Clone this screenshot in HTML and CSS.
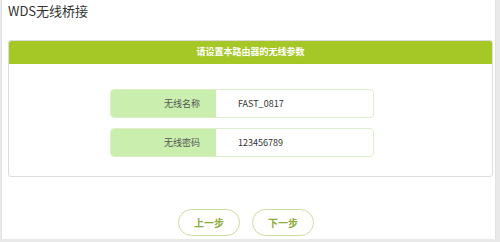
FILE: index.html
```html
<!DOCTYPE html>
<html lang="zh-CN">
<head>
    <meta charset="UTF-8">
    <title>WDS无线桥接</title>
    <link rel="stylesheet" href="styles.css">
</head>
<body>
    <div class="page">
        <h1 class="title">WDS无线桥接</h1>

        <div class="card">
            <div class="card-head">请设置本路由器的无线参数</div>
            <div class="card-body">
                <div class="field">
                    <div class="field-label">无线名称</div>
                    <div class="field-value">FAST_0817</div>
                </div>
                <div class="field">
                    <div class="field-label">无线密码</div>
                    <div class="field-value">123456789</div>
                </div>
            </div>
        </div>

        <div class="actions">
            <button type="button" class="step-btn">上一步</button>
            <button type="button" class="step-btn">下一步</button>
        </div>
    </div>
</body>
</html>
```

FILE: styles.css
```css
/* General styles */
body {
    margin: 0;
    font-family: "Noto Sans CJK SC", "Liberation Sans", sans-serif;
    background-color: #e9e9e9;
}

.page {
    box-sizing: border-box;
    width: 495px;
    height: 239px;
    margin-left: 1px;
    padding: 0 2px 0 6px;
    background: #fff;
    border-left: 1px solid #e2e2e2;
    border-right: 1px solid #e2e2e2;
    overflow: hidden;
}

.title {
    margin: 0;
    padding-top: 1px;
    height: 39px;
    font-size: 13px;
    line-height: 20px;
    font-weight: normal;
    color: #333;
}

/* Card */
.card {
    border: 1px solid #dcdcdc;
    border-radius: 3px;
    overflow: hidden;
}

.card-head {
    height: 23px;
    line-height: 22px;
    background-color: #a6c827;
    color: #fff;
    font-size: 9px;
    font-weight: bold;
    text-align: center;
}

.card-body {
    display: flex;
    flex-direction: column;
    gap: 10px;
    padding: 25px 0 19px 101px;
}

.field {
    display: flex;
    width: 264px;
    height: 29px;
    box-sizing: border-box;
    border: 1px solid #dcefc9;
    border-radius: 4px;
    overflow: hidden;
    font-size: 9px;
}

.field-label {
    width: 105px;
    padding-right: 16px;
    box-sizing: border-box;
    background-color: #c9eeae;
    color: #555;
    text-align: right;
    line-height: 27px;
}

.field-value {
    flex: 1;
    padding-left: 22px;
    color: #333;
    line-height: 27px;
}

/* Buttons */
.actions {
    display: flex;
    gap: 12px;
    padding: 32px 0 0 170px;
}

.step-btn {
    width: 62px;
    height: 27px;
    padding: 0;
    border: 1.5px solid #cbdd9c;
    border-radius: 14px;
    background: #fff;
    color: #8eab3c;
    font-family: inherit;
    font-size: 10px;
    font-weight: bold;
    cursor: pointer;
}
```
